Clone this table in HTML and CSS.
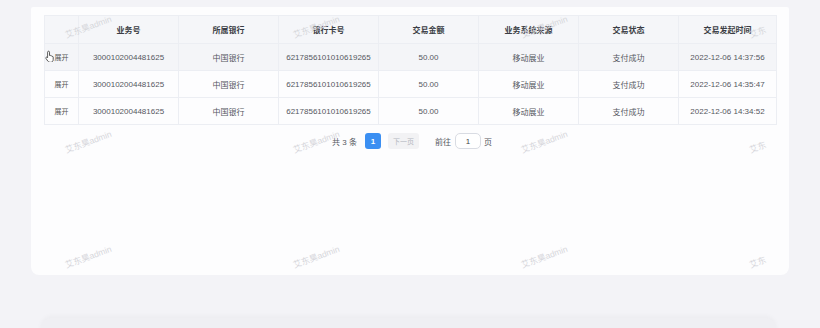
FILE: index.html
```html
<!DOCTYPE html>
<html lang="zh">
<head>
<meta charset="utf-8">
<link rel="stylesheet" href="styles.css">
</head>
<body>
<div class="page">
  <div class="card">
    <table class="grid">
      <colgroup>
        <col class="c-exp"><col class="c"><col class="c"><col class="c"><col class="c"><col class="c"><col class="c"><col class="c-last">
      </colgroup>
      <thead>
        <tr><th></th><th>业务号</th><th>所属银行</th><th>银行卡号</th><th>交易金额</th><th>业务系统来源</th><th>交易状态</th><th>交易发起时间</th></tr>
      </thead>
      <tbody>
        <tr class="hover"><td class="exp">展开</td><td>3000102004481625</td><td>中国银行</td><td>6217856101010619265</td><td>50.00</td><td>移动展业</td><td>支付成功</td><td>2022-12-06 14:37:56</td></tr>
        <tr><td class="exp">展开</td><td>3000102004481625</td><td>中国银行</td><td>6217856101010619265</td><td>50.00</td><td>移动展业</td><td>支付成功</td><td>2022-12-06 14:35:47</td></tr>
        <tr><td class="exp">展开</td><td>3000102004481625</td><td>中国银行</td><td>6217856101010619265</td><td>50.00</td><td>移动展业</td><td>支付成功</td><td>2022-12-06 14:34:52</td></tr>
      </tbody>
    </table>
    <div class="pager">
      <span class="total">共 3 条</span>
      <span class="pg active">1</span>
      <span class="pg next">下一页</span>
      <span class="goto">前往</span>
      <span class="jump">1</span>
      <span class="goto">页</span>
    </div>
    <div class="watermarks">
      <span>艾东昊admin</span><span>艾东昊admin</span><span>艾东昊admin</span><span class="cut">艾东</span>
      <span>艾东昊admin</span><span>艾东昊admin</span><span>艾东昊admin</span><span class="cut">艾东</span>
      <span>艾东昊admin</span><span>艾东昊admin</span><span>艾东昊admin</span><span class="cut">艾东</span>
    </div>
    <svg class="cursor" width="11" height="12" viewBox="0 0 11 12">
      <path d="M3.5 1.2c.6 0 1 .4 1 1v3.3l.2-.1c.5-.3 1.1 0 1.2.5.5-.3 1.1 0 1.2.5.5-.2 1.1.1 1.1.7v2.4c0 1.5-1 2.8-2.6 2.8H5c-.9 0-1.6-.4-2.1-1.1L1 8.5c-.4-.5-.2-1.1.3-1.3.4-.2.9 0 1.2.3l.1.2V2.2c0-.6.4-1 .9-1z" fill="#fff" stroke="#333" stroke-width=".8"/>
    </svg>
  </div>
  <div class="under"></div>
</div>
</body>
</html>
```
FILE: styles.css
```css
* { box-sizing: border-box; }
html, body { margin: 0; padding: 0; }
body {
  background: #f3f3f7;
  font-family: "Liberation Sans", "Noto Sans CJK SC", sans-serif;
  width: 820px;
  height: 328px;
  overflow: hidden;
}
.page {
  padding: 7px 0 0 31px;
}
.card {
  position: relative;
  width: 758px;
  height: 268px;
  background: #fdfdfe;
  border-radius: 2px 2px 8px 8px;
  padding: 8px 13px 0;
  overflow: hidden;
}
.grid {
  width: 732px;
  table-layout: fixed;
  border-collapse: collapse;
  border: 1px solid #e9ebf1;
}
.c-exp { width: 34px; }
.c { width: 100px; }
.c-last { width: 98px; }
.grid th, .grid td {
  border: 1px solid #eceef3;
  text-align: center;
  padding: 0;
  white-space: nowrap;
}
.grid th {
  height: 28px;
  background: #f5f6f9;
  color: #3a3d44;
  font-size: 8px;
  font-weight: bold;
}
.grid td {
  height: 27px;
  color: #55585f;
  font-size: 8px;
}
.grid td.exp { font-size: 7px; color: #555; }
.grid tr.hover td { background: #f4f5f8; }
.pager {
  display: flex;
  align-items: center;
  justify-content: center;
  height: 16px;
  margin-top: 8px;
  padding-left: 4px;
  font-size: 8px;
  color: #55585f;
}
.total { margin-right: 8px; }
.pg {
  height: 16px;
  border-radius: 3px;
  display: flex;
  align-items: center;
  justify-content: center;
}
.pg.active {
  width: 16px;
  background: #3b8ff2;
  color: #fff;
  font-weight: bold;
  margin-right: 7px;
}
.pg.next {
  width: 31px;
  background: #f2f2f4;
  color: #b5b8c0;
  font-size: 7px;
  margin-right: 16px;
}
.jump {
  width: 26px;
  height: 16px;
  margin: 0 3px 0 4px;
  border: 1px solid #d9dce3;
  border-radius: 5px;
  display: flex;
  align-items: center;
  justify-content: center;
  color: #444;
  background: #fff;
}
.watermarks {
  position: absolute;
  left: 0;
  top: 0;
  width: 758px;
  height: 268px;
  pointer-events: none;
  display: grid;
  grid-template-columns: repeat(4, 228px);
  grid-auto-rows: 115px;
  padding: 6px 0 0 29px;
}
.watermarks span {
  width: 56px;
  height: 26px;
  display: flex;
  align-items: center;
  justify-content: center;
  font-size: 8.5px;
  color: #d6d6db;
  transform: rotate(-20deg);
  white-space: nowrap;
}
.watermarks span.cut {
  justify-content: flex-start;
  padding-left: 4px;
}
.cursor {
  position: absolute;
  left: 14px;
  top: 43px;
}
.under {
  width: 735px;
  height: 20px;
  margin: 43px 0 0 10px;
  border-radius: 10px 10px 0 0;
  background: #efeff3;
  box-shadow: 0 -2px 5px rgba(0,0,0,0.03);
}
```
